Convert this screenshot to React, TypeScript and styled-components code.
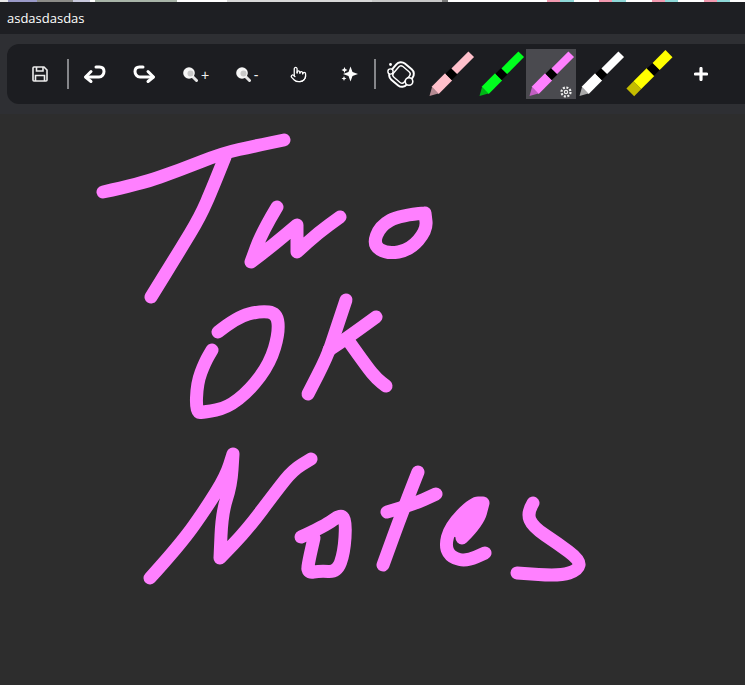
import React from "react";
import styled, { createGlobalStyle } from "styled-components";
import { Pointer } from "lucide-react";

const GlobalStyle = createGlobalStyle`
  html, body {
    margin: 0;
    padding: 0;
    height: 100%;
    overflow: hidden;
    background: #2d2d2d;
  }
`;

const Window = styled.div`
  width: 745px;
  height: 685px;
  display: flex;
  flex-direction: column;
  background: #2d2d2d;
  font-family: "Open Sans", "Noto Sans", sans-serif;
`;

const DesktopEdge = styled.div`
  height: 2px;
  flex: none;
  background: linear-gradient(
    to right,
    #e8e8e8 0 8px,
    #9a9ac8 8px 37px,
    #8c8c88 37px 73px,
    #c8c8dc 73px 90px,
    #fff 90px 95px,
    #a8b4a8 95px 177px,
    #fff 177px 227px,
    #d8d8d8 227px 372px,
    #c8c8c8 372px 442px,
    #777 442px 448px,
    #fff 448px 547px,
    #f29ab0 547px 560px,
    #8fd8d8 560px 574px,
    #fff 574px 599px,
    #f29ab0 599px 612px,
    #8fd8d8 612px 626px,
    #fff 626px 652px,
    #f29ab0 652px 665px,
    #8fd8d8 665px 678px,
    #fff 678px 704px,
    #f29ab0 704px 717px,
    #8fd8d8 717px 730px,
    #fff 730px 745px
  );
`;

const TitleBar = styled.div`
  height: 32px;
  flex: none;
  display: flex;
  align-items: center;
  padding-left: 7px;
  background: #1e1f23;
  color: #fff;
  font-size: 13px;
`;

const ToolbarBand = styled.div`
  flex: none;
  height: 80px;
  box-sizing: border-box;
  padding: 10px 0 10px 7px;
  background: #2e2f33;
`;

const Toolbar = styled.div`
  height: 60px;
  display: flex;
  align-items: center;
  padding-left: 8px;
  background: #1c1d21;
  border-radius: 12px 0 0 12px;
`;

const ToolGroup = styled.div<{ $gap: number }>`
  display: flex;
  align-items: center;
  gap: ${({ $gap }) => $gap}px;
`;

const Divider = styled.div<{ $inset: number }>`
  width: 2px;
  height: 30px;
  flex: none;
  margin-left: ${({ $inset }) => $inset}px;
  background: #85868a;
`;

const ToolButton = styled.div<{ $selected?: boolean }>`
  position: relative;
  width: 50px;
  height: 50px;
  flex: none;
  display: flex;
  align-items: center;
  justify-content: center;
  color: #fff;
  background: ${({ $selected }) => ($selected ? "#4a4a4f" : "transparent")};
`;

const ZoomLabel = styled.span`
  font-family: "Liberation Sans", sans-serif;
  font-size: 14px;
  color: #f0f0f0;
  margin-left: 3px;
  margin-top: 2px;
`;

const SettingsBadge = styled.svg`
  position: absolute;
  right: 4px;
  bottom: 1px;
  width: 12px;
  height: 12px;
`;

const Canvas = styled.div`
  flex: 1;
  background: #2d2d2d;
`;

const Drawing = styled.svg`
  display: block;
  width: 745px;
  height: 571px;
`;

type Pt = [number, number];

// ink strokes, in page coordinates. a repeated point makes a sharp corner
const strokes: Pt[][] = [
  [[103, 192], [140, 184], [180, 170], [223, 153], [255, 146], [284, 140]],
  [[225, 157], [213, 187], [200, 217], [180, 250], [151, 297]],
  [[277, 207], [262, 232], [251, 262], [251, 262], [272, 246], [297, 225], [297, 225], [297, 252], [297, 252], [318, 233], [340, 217]],
  [[425, 213], [400, 215], [380, 226], [373, 245], [387, 254], [410, 250], [427, 230], [425, 213]],
  [[218, 332], [237, 317], [260, 311], [277, 313], [279, 333], [270, 363], [250, 390], [227, 408], [205, 412], [196, 413], [197, 383], [205, 362], [212, 350]],
  [[346, 300], [335, 333], [327, 357], [308, 394]],
  [[376, 317], [350, 336], [329, 350]],
  [[350, 343], [367, 367], [377, 379], [386, 386]],
  [[150, 578], [180, 545], [207, 507], [226, 476], [233, 454], [233, 454], [231, 485], [222, 513], [220, 558], [220, 558], [247, 530], [277, 490], [293, 470], [311, 459]],
  [[301, 537], [325, 526], [341, 514], [346, 522], [344, 553], [337, 572], [320, 571], [307, 573], [309, 560], [314, 538]],
  [[418, 472], [403, 510], [383, 565]],
  [[387, 512], [412, 505], [436, 494]],
  [[462, 538], [478, 522], [483, 503], [483, 503], [473, 503], [450, 527], [445, 547], [452, 558], [467, 561], [485, 553]],
  [[457, 531], [478, 510]],
  [[533, 503], [527, 513], [533, 527], [557, 543], [580, 560], [578, 570], [560, 576], [517, 573]],
];

// midpoint smoothing so the ink doesn't look like a polyline
const toPath = (pts: Pt[]) => {
  let d = `M${pts[0][0]} ${pts[0][1]}`;
  for (let i = 1; i < pts.length - 1; i++) {
    const mx = (pts[i][0] + pts[i + 1][0]) / 2;
    const my = (pts[i][1] + pts[i + 1][1]) / 2;
    d += ` Q${pts[i][0]} ${pts[i][1]} ${mx} ${my}`;
  }
  const last = pts[pts.length - 1];
  return `${d} L${last[0]} ${last[1]}`;
};

const SaveIcon = () => (
  <svg width="16" height="16" viewBox="0 0 16 16" fill="none" stroke="#ececec" strokeWidth="1.600">
    <path d="M2 1h10l3 3v10a1 1 0 0 1-1 1H2a1 1 0 0 1-1-1V2a1 1 0 0 1 1-1z" />
    <path d="M4.500 1v4h6.500V1" />
    <path d="M3.500 15V9.500h9V15" />
  </svg>
);

const UndoIcon = () => (
  <svg width="24" height="20" viewBox="0 0 24 20" fill="none" stroke="#fff" strokeWidth="3" strokeLinecap="round" strokeLinejoin="round">
    <path d="M14 3h3.500c3 0 4.500 2 4.500 4.500S20 13 17 13H4" />
    <path d="M9 7.500L3.500 13 9 17.500" />
  </svg>
);

const RedoIcon = () => (
  <svg width="24" height="20" viewBox="0 0 24 20" fill="none" stroke="#fff" strokeWidth="3" strokeLinecap="round" strokeLinejoin="round">
    <path d="M10 3H6.500C3.500 3 2 5 2 7.500S4 13 7 13h13" />
    <path d="M15 7.500l5.500 5.500-5.500 4.500" />
  </svg>
);

const MagnifierIcon = () => (
  <svg width="15" height="15" viewBox="0 0 15 15">
    <path d="M9.500 9.500L13.500 13.500" stroke="#e4e4e4" strokeWidth="3" strokeLinecap="round" />
    <circle cx="6" cy="6" r="5.800" fill="#f6f6f6" />
    <circle cx="7.500" cy="6.500" r="3" fill="#c8c8c8" />
  </svg>
);

const SparklesIcon = () => (
  <svg width="18" height="18" viewBox="0 0 18 18" fill="#fff">
    <path d="M10.500 1.500L12.500 7 18 9 12.500 11 10.500 16.500 8.500 11 3 9 8.500 7z" />
    <path d="M4.500 2L5.400 4 7.500 5 5.400 6 4.500 8 3.600 6 1.500 5 3.600 4z" />
    <path d="M4 11L4.700 12.800 6.500 13.500 4.700 14.200 4 16 3.300 14.200 1.500 13.500 3.300 12.800z" />
  </svg>
);

const LassoIcon = () => (
  <svg width="30" height="30" viewBox="0 0 30 30" fill="none" stroke="#fff">
    <rect x="5" y="5" width="21" height="21" rx="6" strokeWidth="2" transform="rotate(40 15.500 15.500)" />
    <rect x="8.500" y="8.500" width="14" height="14" rx="3" strokeWidth="1.400" transform="rotate(40 15.500 15.500)" />
    <circle cx="23" cy="22.500" r="3.800" fill="#1c1d21" strokeWidth="1.600" />
    <circle cx="4.500" cy="12.500" r="2.600" fill="#1c1d21" strokeWidth="1.400" />
    <circle cx="4.500" cy="5.500" r="1.400" fill="#fff" stroke="none" />
  </svg>
);

const PlusIcon = () => (
  <svg width="14" height="14" viewBox="0 0 14 14" stroke="#fff" strokeWidth="3.200" strokeLinecap="round">
    <path d="M7 1.500v11M1.500 7h11" />
  </svg>
);

// drawn lying along x from the tip, then turned up onto the diagonal
const PenIcon = ({ color, tip }: { color: string; tip: string }) => (
  <svg width="50" height="50" viewBox="0 0 50 50">
    <g transform="translate(3.500 47) rotate(-45)">
      <path d="M0 0L8 -4.500V4.500z" fill={tip} />
      <rect x="8" y="-5" width="19" height="10" fill={color} />
      <rect x="27" y="-4.500" width="8" height="9" fill="#000" />
      <rect x="35" y="-4" width="24" height="8" fill={color} />
    </g>
  </svg>
);

const HighlighterIcon = ({ color, tip }: { color: string; tip: string }) => (
  <svg width="50" height="50" viewBox="0 0 50 50">
    <g transform="translate(4.300 43.300) rotate(-45)">
      <rect x="0" y="-5.500" width="10" height="11" fill={tip} />
      <rect x="10" y="-5.500" width="18.500" height="11" fill={color} />
      <rect x="28.500" y="-5" width="8" height="10" fill="#000" />
      <rect x="36.500" y="-5" width="18.200" height="10" fill={color} />
    </g>
  </svg>
);

const GearBadge = () => (
  <SettingsBadge viewBox="0 0 12 12" fill="none" stroke="#f0f0f0">
    <circle cx="6" cy="6" r="4.500" strokeWidth="2.200" strokeDasharray="2 1.500" />
    <circle cx="6" cy="6" r="1.600" strokeWidth="1.200" />
  </SettingsBadge>
);

const App = () => (
  <Window>
    <GlobalStyle />
    <DesktopEdge />
    <TitleBar>asdasdasdas</TitleBar>
    <ToolbarBand>
      <Toolbar>
        <ToolButton>
          <SaveIcon />
        </ToolButton>
        <Divider $inset={2} />
        <ToolGroup $gap={1}>
          <ToolButton>
            <UndoIcon />
          </ToolButton>
          <ToolButton>
            <RedoIcon />
          </ToolButton>
          <ToolButton>
            <MagnifierIcon />
            <ZoomLabel>+</ZoomLabel>
          </ToolButton>
          <ToolButton>
            <MagnifierIcon />
            <ZoomLabel>-</ZoomLabel>
          </ToolButton>
          <ToolButton>
            <Pointer size={17} strokeWidth={1.8} />
          </ToolButton>
          <ToolButton>
            <SparklesIcon />
          </ToolButton>
        </ToolGroup>
        <Divider $inset={0} />
        <ToolButton>
          <LassoIcon />
        </ToolButton>
        <ToolButton>
          <PenIcon color="#ffc0cb" tip="#b58a92" />
        </ToolButton>
        <ToolButton>
          <PenIcon color="#00ff1e" tip="#00b516" />
        </ToolButton>
        <ToolButton $selected>
          <PenIcon color="#ff80ff" tip="#c25fc2" />
          <GearBadge />
        </ToolButton>
        <ToolButton>
          <PenIcon color="#ffffff" tip="#a8a8a8" />
        </ToolButton>
        <ToolButton>
          <HighlighterIcon color="#ffff00" tip="#c4bc00" />
        </ToolButton>
        <ToolButton>
          <PlusIcon />
        </ToolButton>
      </Toolbar>
    </ToolbarBand>
    <Canvas>
      <Drawing viewBox="0 114 745 571" fill="none" stroke="#ff80ff" strokeWidth="13" strokeLinecap="round" strokeLinejoin="round">
        {strokes.map((pts, i) => (
          <path key={i} d={toPath(pts)} />
        ))}
      </Drawing>
    </Canvas>
  </Window>
);

export default App;
